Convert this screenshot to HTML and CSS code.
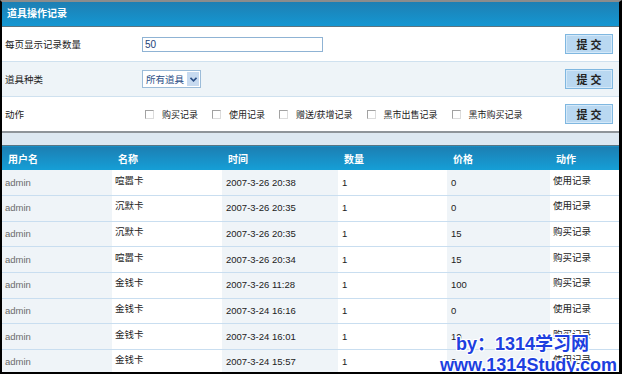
FILE: index.html
```html
<!DOCTYPE html>
<html lang="zh">
<head>
    <meta charset="UTF-8">
    <title>道具操作记录</title>
    <link rel="stylesheet" href="styles.css">
</head>
<body>
    <div class="frame">
        <div class="title-bar">道具操作记录</div>

        <form class="filter">
            <div class="form-row">
                <label class="label">每页显示记录数量</label>
                <div class="field"><input type="text" class="text-input" value="50"></div>
                <button type="button" class="submit">提 交</button>
            </div>
            <div class="form-row alt">
                <label class="label">道具种类</label>
                <div class="field">
                    <div class="fake-select">
                        <span class="select-text">所有道具</span>
                        <span class="select-arrow">
                            <svg width="7" height="5" viewBox="0 0 7 5"><path d="M0.5 0.8 L3.5 3.8 L6.5 0.8" fill="none" stroke="#2b4f86" stroke-width="1.6"/></svg>
                        </span>
                    </div>
                </div>
                <button type="button" class="submit">提 交</button>
            </div>
            <div class="form-row last">
                <label class="label">动作</label>
                <div class="field checks">
                    <label class="check"><input type="checkbox">购买记录</label>
                    <label class="check"><input type="checkbox">使用记录</label>
                    <label class="check"><input type="checkbox">赠送/获增记录</label>
                    <label class="check"><input type="checkbox">黑市出售记录</label>
                    <label class="check"><input type="checkbox">黑市购买记录</label>
                </div>
                <button type="button" class="submit">提 交</button>
            </div>
        </form>

        <div class="band"></div>

        <table class="records">
            <colgroup>
                <col style="width:110px">
                <col style="width:110px">
                <col style="width:116px">
                <col style="width:109px">
                <col style="width:103px">
                <col style="width:69px">
            </colgroup>
            <thead>
                <tr>
                    <th>用户名</th>
                    <th>名称</th>
                    <th>时间</th>
                    <th>数量</th>
                    <th>价格</th>
                    <th>动作</th>
                </tr>
            </thead>
            <tbody id="recordRows"></tbody>
        </table>

        <div class="watermark">
            <div class="wm-line first">by：1314学习网</div>
            <div class="wm-line">www.1314Study.com</div>
        </div>
    </div>

    <script>
        // Data rows for the record table
        const records = [
            ['admin', '喧嚣卡', '2007-3-26 20:38', '1', '0', '使用记录'],
            ['admin', '沉默卡', '2007-3-26 20:35', '1', '0', '使用记录'],
            ['admin', '沉默卡', '2007-3-26 20:35', '1', '15', '购买记录'],
            ['admin', '喧嚣卡', '2007-3-26 20:34', '1', '15', '购买记录'],
            ['admin', '金钱卡', '2007-3-26 11:28', '1', '100', '购买记录'],
            ['admin', '金钱卡', '2007-3-24 16:16', '1', '0', '使用记录'],
            ['admin', '金钱卡', '2007-3-24 16:01', '1', '10', '购买记录'],
            ['admin', '金钱卡', '2007-3-24 15:57', '1', '0', '使用记录']
        ];

        const body = document.getElementById('recordRows');
        records.forEach(r => {
            const tr = document.createElement('tr');
            tr.innerHTML = `
                <td class="user">${r[0]}</td>
                <td class="up">${r[1]}</td>
                <td>${r[2]}</td>
                <td>${r[3]}</td>
                <td>${r[4]}</td>
                <td class="up">${r[5]}</td>
            `;
            body.appendChild(tr);
        });
    </script>
</body>
</html>
```

FILE: styles.css
```css
/* Basis */
body {
    margin: 0;
    background: #fff;
    font-family: "Liberation Sans", "Noto Sans CJK SC", sans-serif;
    font-size: 9.5px;
    color: #222;
}

.frame {
    position: relative;
    width: 617px;
    height: 370px;
    border-top: 2px solid #8c8c8c;
    border-left: 2px solid #000;
    border-right: 3px solid #000;
    border-bottom: 2px solid #000;
    overflow: hidden;
    background: #fff;
}

/* Judul biru */
.title-bar {
    height: 24px;
    line-height: 24px;
    padding-left: 5px;
    color: #fff;
    font-size: 10px;
    font-weight: bold;
    background: linear-gradient(#1e7fb3, #1497d2);
    border-bottom: 1px solid #5b7480;
}

/* Form filter */
.filter {
    margin: 0;
}

.form-row {
    display: flex;
    align-items: center;
    height: 34px;
    padding: 0 6px 0 3px;
    border-bottom: 1px solid #cfe1ef;
}

.form-row.alt {
    background: #eef4f8;
}

.form-row.last {
    border-bottom: none;
}

.label {
    width: 137px;
    flex-shrink: 0;
}

.field {
    flex: 1;
    display: flex;
    align-items: center;
}

.text-input {
    width: 175px;
    height: 13px;
    margin: 0;
    padding: 0 2px;
    border: 1px solid #8fb3d4;
    font-family: inherit;
    font-size: 10px;
    color: #1d3f78;
    outline: none;
}

.fake-select {
    display: flex;
    align-items: center;
    width: 57px;
    height: 16px;
    border: 1px solid #9cbcd9;
    background: #fff;
}

.select-text {
    flex: 1;
    padding-left: 3px;
    color: #2a4d86;
}

.select-arrow {
    display: flex;
    align-items: center;
    justify-content: center;
    width: 12px;
    height: 14px;
    margin-right: 1px;
    background: #c7daf0;
}

.checks {
    gap: 14px;
    padding-left: 3px;
    font-size: 9px;
}

.check {
    display: flex;
    align-items: center;
    gap: 8px;
    color: #222;
}

.check input {
    appearance: none;
    -webkit-appearance: none;
    width: 9px;
    height: 9px;
    margin: 0;
    border: 1px solid #a2a2a2;
    border-right-color: #dcdcdc;
    border-bottom-color: #dcdcdc;
    background: #fff;
}

.submit {
    width: 48px;
    height: 20px;
    padding: 0;
    border: 1px solid #7fb7e0;
    box-shadow: inset 0 0 0 1px #d4e8f8;
    background: #b9d8f1;
    font-family: inherit;
    font-size: 11px;
    font-weight: bold;
    color: #222;
}

/* Pemisah */
.band {
    height: 12px;
    border-top: 2px solid #8e9499;
    background: #dde8f1;
}

/* Tabel catatan */
.records {
    width: 617px;
    border-collapse: collapse;
    table-layout: fixed;
}

.records th {
    height: 24px;
    padding: 0 0 0 6px;
    text-align: left;
    color: #fff;
    font-size: 10px;
    font-weight: bold;
    background: linear-gradient(#1c7eb2, #159fd7);
    border-top: 1px solid #587584;
}

.records tbody tr {
    height: 25.67px;
}

.records td {
    padding: 0 0 0 4px;
    line-height: 12px;
    border-bottom: 1px solid #c9def0;
    white-space: nowrap;
}

.records td:nth-child(odd) {
    background: #eff4f8;
}

.records td.user {
    padding-left: 3px;
    color: #6b6b6b;
}

.records td.up {
    padding-bottom: 4px;
    padding-left: 3px;
}

/* Watermark */
.watermark {
    position: absolute;
    left: 438px;
    bottom: -4px;
    font-family: "Liberation Sans", "Noto Sans CJK SC", sans-serif;
    font-size: 18px;
    font-weight: bold;
    line-height: 21px;
    color: #1d3fe0;
    text-shadow: 1px 0 #fff, -1px 0 #fff, 0 1px #fff, 0 -1px #fff, 1px 1px #fff, -1px -1px #fff, 1px -1px #fff, -1px 1px #fff;
    white-space: nowrap;
}

.wm-line.first {
    padding-left: 16px;
}
```
